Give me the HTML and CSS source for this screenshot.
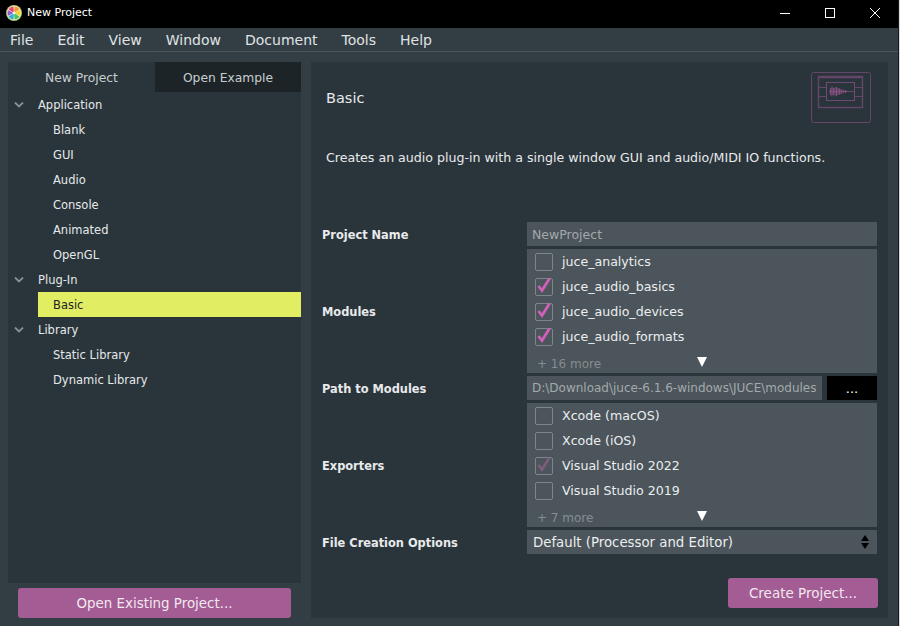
FILE: index.html
```html
<!DOCTYPE html>
<html lang="en">
<head>
<meta charset="utf-8">
<title>New Project</title>
<link rel="stylesheet" href="styles.css">
</head>
<body>
<div class="window">
  <header class="titlebar">
    <svg class="app-icon" width="16" height="16" viewBox="0 0 17 17">
      <circle cx="8.5" cy="8.5" r="8.5" fill="#b4c860"/>
      <circle cx="8.5" cy="8.5" r="7.4" fill="#f6f6ee"/>
      <path d="M8.5 8.5L9 1.6A7 7 0 0 1 14.4 4.8Z" fill="#f29a2e"/>
      <path d="M8.5 8.5L14.8 5.6A7 7 0 0 1 14.8 11.4Z" fill="#efd52c"/>
      <path d="M8.5 8.5L14.4 12.2A7 7 0 0 1 9 15.4Z" fill="#4cc35e"/>
      <path d="M8.5 8.5L8 15.4A7 7 0 0 1 2.6 12.2Z" fill="#2cb4d2"/>
      <path d="M8.5 8.5L2.2 11.4A7 7 0 0 1 2.2 5.6Z" fill="#8a5cd0"/>
      <path d="M8.5 8.5L2.6 4.8A7 7 0 0 1 8 1.6Z" fill="#ec4478"/>
      <circle cx="8.5" cy="8.5" r="1.5" fill="#f6f6ee"/>
    </svg>
    <span class="title-text">New Project</span>
    <div class="win-controls">
      <svg width="10" height="10" viewBox="0 0 10 10"><path d="M0 5.5H10" stroke="#fff"/></svg>
      <svg width="10" height="10" viewBox="0 0 10 10"><rect x="0.5" y="0.5" width="9" height="9" fill="none" stroke="#fff"/></svg>
      <svg width="10" height="10" viewBox="0 0 10 10"><path d="M0 0L10 10M10 0L0 10" stroke="#fff"/></svg>
    </div>
  </header>
  <nav class="menubar">
    <span>File</span><span>Edit</span><span>View</span><span>Window</span><span>Document</span><span>Tools</span><span>Help</span>
  </nav>
  <main class="content">
    <aside class="sidebar">
      <div class="side-panel">
        <div class="tabs">
          <div class="tab active">New Project</div>
          <div class="tab">Open Example</div>
        </div>
        <div class="tree">
          <div class="tree-row head"><svg class="chev" width="10" height="6" viewBox="0 0 10 6"><path d="M1 0.5L5 4.5L9 0.5" fill="none" stroke="#8a9194" stroke-width="1.8"/></svg>Application</div>
          <div class="tree-row leaf"><span>Blank</span></div>
          <div class="tree-row leaf"><span>GUI</span></div>
          <div class="tree-row leaf"><span>Audio</span></div>
          <div class="tree-row leaf"><span>Console</span></div>
          <div class="tree-row leaf"><span>Animated</span></div>
          <div class="tree-row leaf"><span>OpenGL</span></div>
          <div class="tree-row head"><svg class="chev" width="10" height="6" viewBox="0 0 10 6"><path d="M1 0.5L5 4.5L9 0.5" fill="none" stroke="#8a9194" stroke-width="1.8"/></svg>Plug-In</div>
          <div class="tree-row leaf selected"><span>Basic</span></div>
          <div class="tree-row head"><svg class="chev" width="10" height="6" viewBox="0 0 10 6"><path d="M1 0.5L5 4.5L9 0.5" fill="none" stroke="#8a9194" stroke-width="1.8"/></svg>Library</div>
          <div class="tree-row leaf"><span>Static Library</span></div>
          <div class="tree-row leaf"><span>Dynamic Library</span></div>
        </div>
      </div>
      <button class="action open-btn">Open Existing Project...</button>
    </aside>
    <section class="detail">
      <div class="detail-head">
        <h1>Basic</h1>
        <svg class="thumb" width="60" height="51" viewBox="0 0 60 51">
          <g fill="none" stroke="#64466a">
            <rect x="0.5" y="0.5" width="59" height="50" rx="2"/>
            <rect x="7.5" y="4.5" width="44" height="31" stroke-width="1.4"/>
            <path d="M7.5 5.5H51.5" stroke-width="1.5"/>
            <rect x="15.5" y="10.5" width="28" height="18" stroke="#704a76"/>
            <path d="M7.5 15.5H15.5M7.5 24.5H15.5M43.5 15.5H51.5M43.5 24.5H51.5M36 19.5H43.5"/>
            <path d="M19.5 16V23M21 14.5V24.5M22.5 16V23M24 15.5V23.5M25.5 15V24M27 16V23M28.5 16.5V22.5M30 17V22M32 17.5V21.5M34.5 18V21" stroke="#83507f" stroke-width="1.1"/>
            <path d="M18 19.5H36" stroke="#83507f"/>
          </g>
        </svg>
      </div>
      <p class="desc">Creates an audio plug-in with a single window GUI and audio/MIDI IO functions.</p>
      <div class="form">
        <div class="label name-label">Project Name</div>
        <div class="field name-field">NewProject</div>

        <div class="label">Modules</div>
        <div class="checks">
          <div class="check-row"><span class="box"></span>juce_analytics</div>
          <div class="check-row"><span class="box"><svg width="18" height="18" viewBox="0 0 18 18"><path d="M3.5 9L7 13.5L14.5 1.5" fill="none" stroke="#d060b8" stroke-width="2.8"/></svg></span>juce_audio_basics</div>
          <div class="check-row"><span class="box"><svg width="18" height="18" viewBox="0 0 18 18"><path d="M3.5 9L7 13.5L14.5 1.5" fill="none" stroke="#d060b8" stroke-width="2.8"/></svg></span>juce_audio_devices</div>
          <div class="check-row"><span class="box"><svg width="18" height="18" viewBox="0 0 18 18"><path d="M3.5 9L7 13.5L14.5 1.5" fill="none" stroke="#d060b8" stroke-width="2.8"/></svg></span>juce_audio_formats</div>
          <div class="more-row"><span>+ 16 more</span><i class="tri"></i></div>
        </div>

        <div class="label">Path to Modules</div>
        <div class="path-row">
          <div class="field path-field">D:\Download\juce-6.1.6-windows\JUCE\modules</div>
          <button class="browse">...</button>
        </div>

        <div class="label">Exporters</div>
        <div class="checks">
          <div class="check-row"><span class="box"></span>Xcode (macOS)</div>
          <div class="check-row"><span class="box"></span>Xcode (iOS)</div>
          <div class="check-row"><span class="box"><svg width="18" height="18" viewBox="0 0 18 18"><path d="M3.5 9L7 13.5L14.5 1.5" fill="none" stroke="#7d5c7e" stroke-width="2.8"/></svg></span>Visual Studio 2022</div>
          <div class="check-row"><span class="box"></span>Visual Studio 2019</div>
          <div class="more-row"><span>+ 7 more</span><i class="tri"></i></div>
        </div>

        <div class="label">File Creation Options</div>
        <div class="field combo">
          <span>Default (Processor and Editor)</span>
          <span class="arrows"><i class="up"></i><i class="down"></i></span>
        </div>
      </div>
      <div class="footer">
        <button class="action create-btn">Create Project...</button>
      </div>
    </section>
  </main>
</div>
</body>
</html>
```
FILE: styles.css
```css
* { box-sizing: border-box; }
html, body { margin: 0; padding: 0; }
body { background: #d8d8d8; font-family: "DejaVu Sans", sans-serif; font-size: 13px; color: #e8eaeb; }
.window { width: 899px; height: 626px; display: flex; flex-direction: column; overflow: hidden; background: #323e44; border-right: 1px solid #161a1c; }

.titlebar { height: 28px; background: #000; display: flex; align-items: center; padding: 0 0 3px 6px; color: #fff; font-size: 11px; flex: none; }
.app-icon { margin-right: 5px; }
.title-text { flex: 1; }
.win-controls { display: flex; align-items: center; gap: 35px; padding-right: 18px; }

.menubar { height: 24px; flex: none; display: flex; align-items: center; padding-left: 10px; gap: 24px; border-bottom: 1px solid #4a5559; font-size: 14px; color: #e0e3e4; background: #323e44; }

.content { flex: 1; display: flex; padding: 10px 10px 8px 8px; gap: 10px; min-height: 0; }

.sidebar { width: 293px; flex: none; display: flex; flex-direction: column; gap: 5px; }
.side-panel { flex: 1; background: #2a353b; display: flex; flex-direction: column; }
.tabs { display: flex; height: 30px; flex: none; font-size: 12.3px; }
.tab { flex: 1; display: flex; align-items: center; justify-content: center; background: #1c2427; color: #c9cdcf; padding-top: 1px; }
.tab.active { flex: none; width: 147px; background: #2a353b; }
.tree { font-size: 11.5px; }
.tree-row { height: 25px; display: flex; align-items: center; color: #e6e9ea; }
.tree-row.head { padding-left: 6px; }
.chev { margin-right: 14px; }
.tree-row.leaf { padding-left: 30px; }
.tree-row.leaf span { padding: 1px 0 0 15px; flex: 1; height: 25px; line-height: 25px; }
.tree-row.selected span { background: #e1ed62; color: #1c2427; }

.action { display: block; border: 0; background: #a45c94; color: #f2e8f0; font: inherit; font-size: 13.4px; height: 30px; border-radius: 3px; padding: 0; }
.open-btn { width: 273px; margin: 0 0 0 10px; flex: none; }

.detail { flex: 1; background: #2a353b; display: flex; flex-direction: column; padding: 0 10px 10px 11px; min-width: 0; }
.detail-head { display: flex; justify-content: space-between; align-items: flex-start; padding: 10px 7px 0 4px; height: 60px; flex: none; }
.detail-head h1 { margin: 16px 0 0; font-size: 14.5px; font-weight: 400; color: #e8eaeb; line-height: 20px; }
.desc { margin: 26px 0 0 4px; height: 20px; line-height: 20px; font-size: 12.6px; color: #e8eaeb; flex: none; white-space: nowrap; }

.form { display: grid; grid-template-columns: 205px 350px; grid-template-rows: 24px 124px 24px 124px 24px; row-gap: 3px; margin-top: 54px; flex: none; }
.label { align-self: center; font-weight: 700; font-size: 11.4px; color: #e8eaeb; padding-top: 2px; }
.field { background: #4b555b; display: flex; align-items: center; padding-left: 5px; color: #a3a9ac; font-size: 12.5px; }
.checks { background: #4b555b; display: flex; flex-direction: column; }
.check-row { height: 25px; display: flex; align-items: center; padding-left: 8px; color: #eceeef; flex: none; font-size: 12.6px; }
.box { width: 18px; height: 18px; border: 1.5px solid #7f868a; border-radius: 2px; margin-right: 9px; display: block; flex: none; position: relative; }
.box svg { position: absolute; left: -1.5px; top: -1.5px; display: block; }
.more-row { flex: 1; display: flex; align-items: flex-end; justify-content: space-between; padding: 0 170px 2px 10px; color: #868c90; font-size: 12px; }
.tri { width: 0; height: 0; border-left: 5px solid transparent; border-right: 5px solid transparent; border-top: 10px solid #fff; margin-bottom: 4px; }

.path-row { display: flex; gap: 5px; }
.path-field { flex: 1; min-width: 0; white-space: nowrap; overflow: hidden; font-size: 12px; }
.browse { width: 50px; flex: none; background: #000; color: #fff; border: 0; font: inherit; padding: 0; }

.combo { color: #eceeef; justify-content: space-between; padding-left: 6px; padding-right: 8px; font-size: 13.3px; }
.arrows { display: flex; flex-direction: column; gap: 2px; }
.arrows i { width: 0; height: 0; border-left: 4px solid transparent; border-right: 4px solid transparent; display: block; }
.arrows .up { border-bottom: 6px solid #000; }
.arrows .down { border-top: 6px solid #000; }

.footer { flex: 1; display: flex; justify-content: flex-end; align-items: flex-end; }
.create-btn { width: 150px; font-size: 13.5px; }
```
